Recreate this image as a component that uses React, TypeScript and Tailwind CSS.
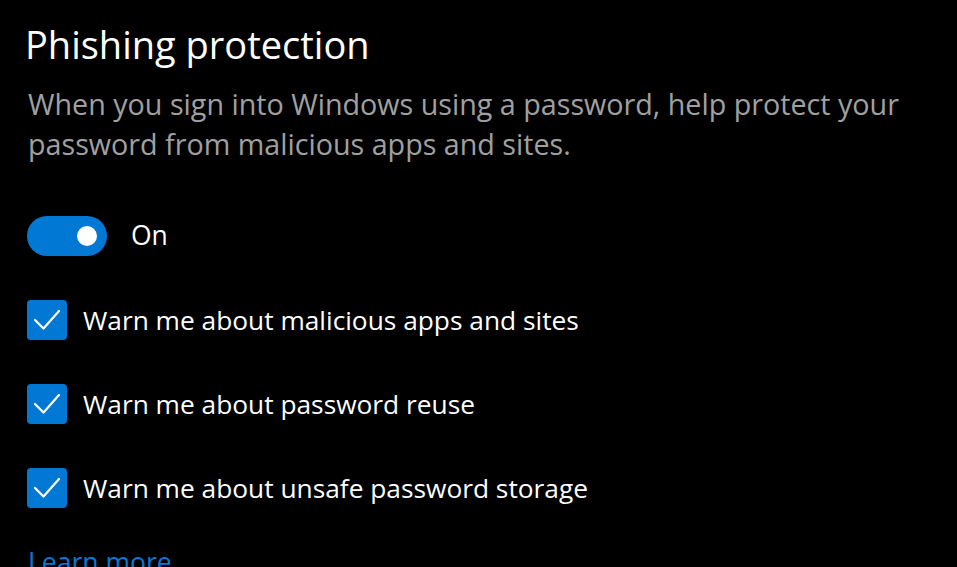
import { useState } from "react";

function Check() {
  return (
    <span className="flex h-[40px] w-[40px] shrink-0 items-center justify-center rounded-[4px] bg-[#0078d4]">
      <svg width="40" height="40" viewBox="0 0 40 40" fill="none">
        <path d="M8 20l8.5 8.5L32 11" stroke="#fff" strokeWidth="2.2" strokeLinecap="round" strokeLinejoin="round" />
      </svg>
    </span>
  );
}

const OPTIONS = [
  "Warn me about malicious apps and sites",
  "Warn me about password reuse",
  "Warn me about unsafe password storage",
];

export default function App() {
  const [on] = useState(true);
  return (
    <div
      className="h-[567px] w-[957px] overflow-hidden bg-black pl-[25px] pt-[17px] text-white"
      style={{ fontFamily: '"Segoe UI", "Open Sans", sans-serif' }}
    >
      <h1 className="text-[38px] leading-[54px] font-normal">Phishing protection</h1>
      <p className="mt-[13px] pl-[3px] text-[28.7px] leading-[40px] text-[#a0a0a0]">
        When you sign into Windows using a password, help protect your
        <br />
        password from malicious apps and sites.
      </p>
      <div className="mt-[52px] flex items-center gap-[24px] pl-[2px]">
        <span className="flex h-[40px] w-[80px] items-center justify-end rounded-full bg-[#0078d4] pr-[10px]">
          <span className="h-[20px] w-[20px] rounded-full bg-white" />
        </span>
        <span className="text-[26.5px]">{on ? "On" : "Off"}</span>
      </div>
      <div className="mt-[44px] flex flex-col gap-[44px] pl-[2px]">
        {OPTIONS.map((o) => (
          <div key={o} className="flex items-center gap-[16px]">
            <Check />
            <span className="text-[26.3px] leading-[40px]">{o}</span>
          </div>
        ))}
      </div>
      <a className="mt-[34px] block pl-[3px] text-[26.5px] leading-[40px] text-[#0a78d6]">Learn more</a>
    </div>
  );
}
